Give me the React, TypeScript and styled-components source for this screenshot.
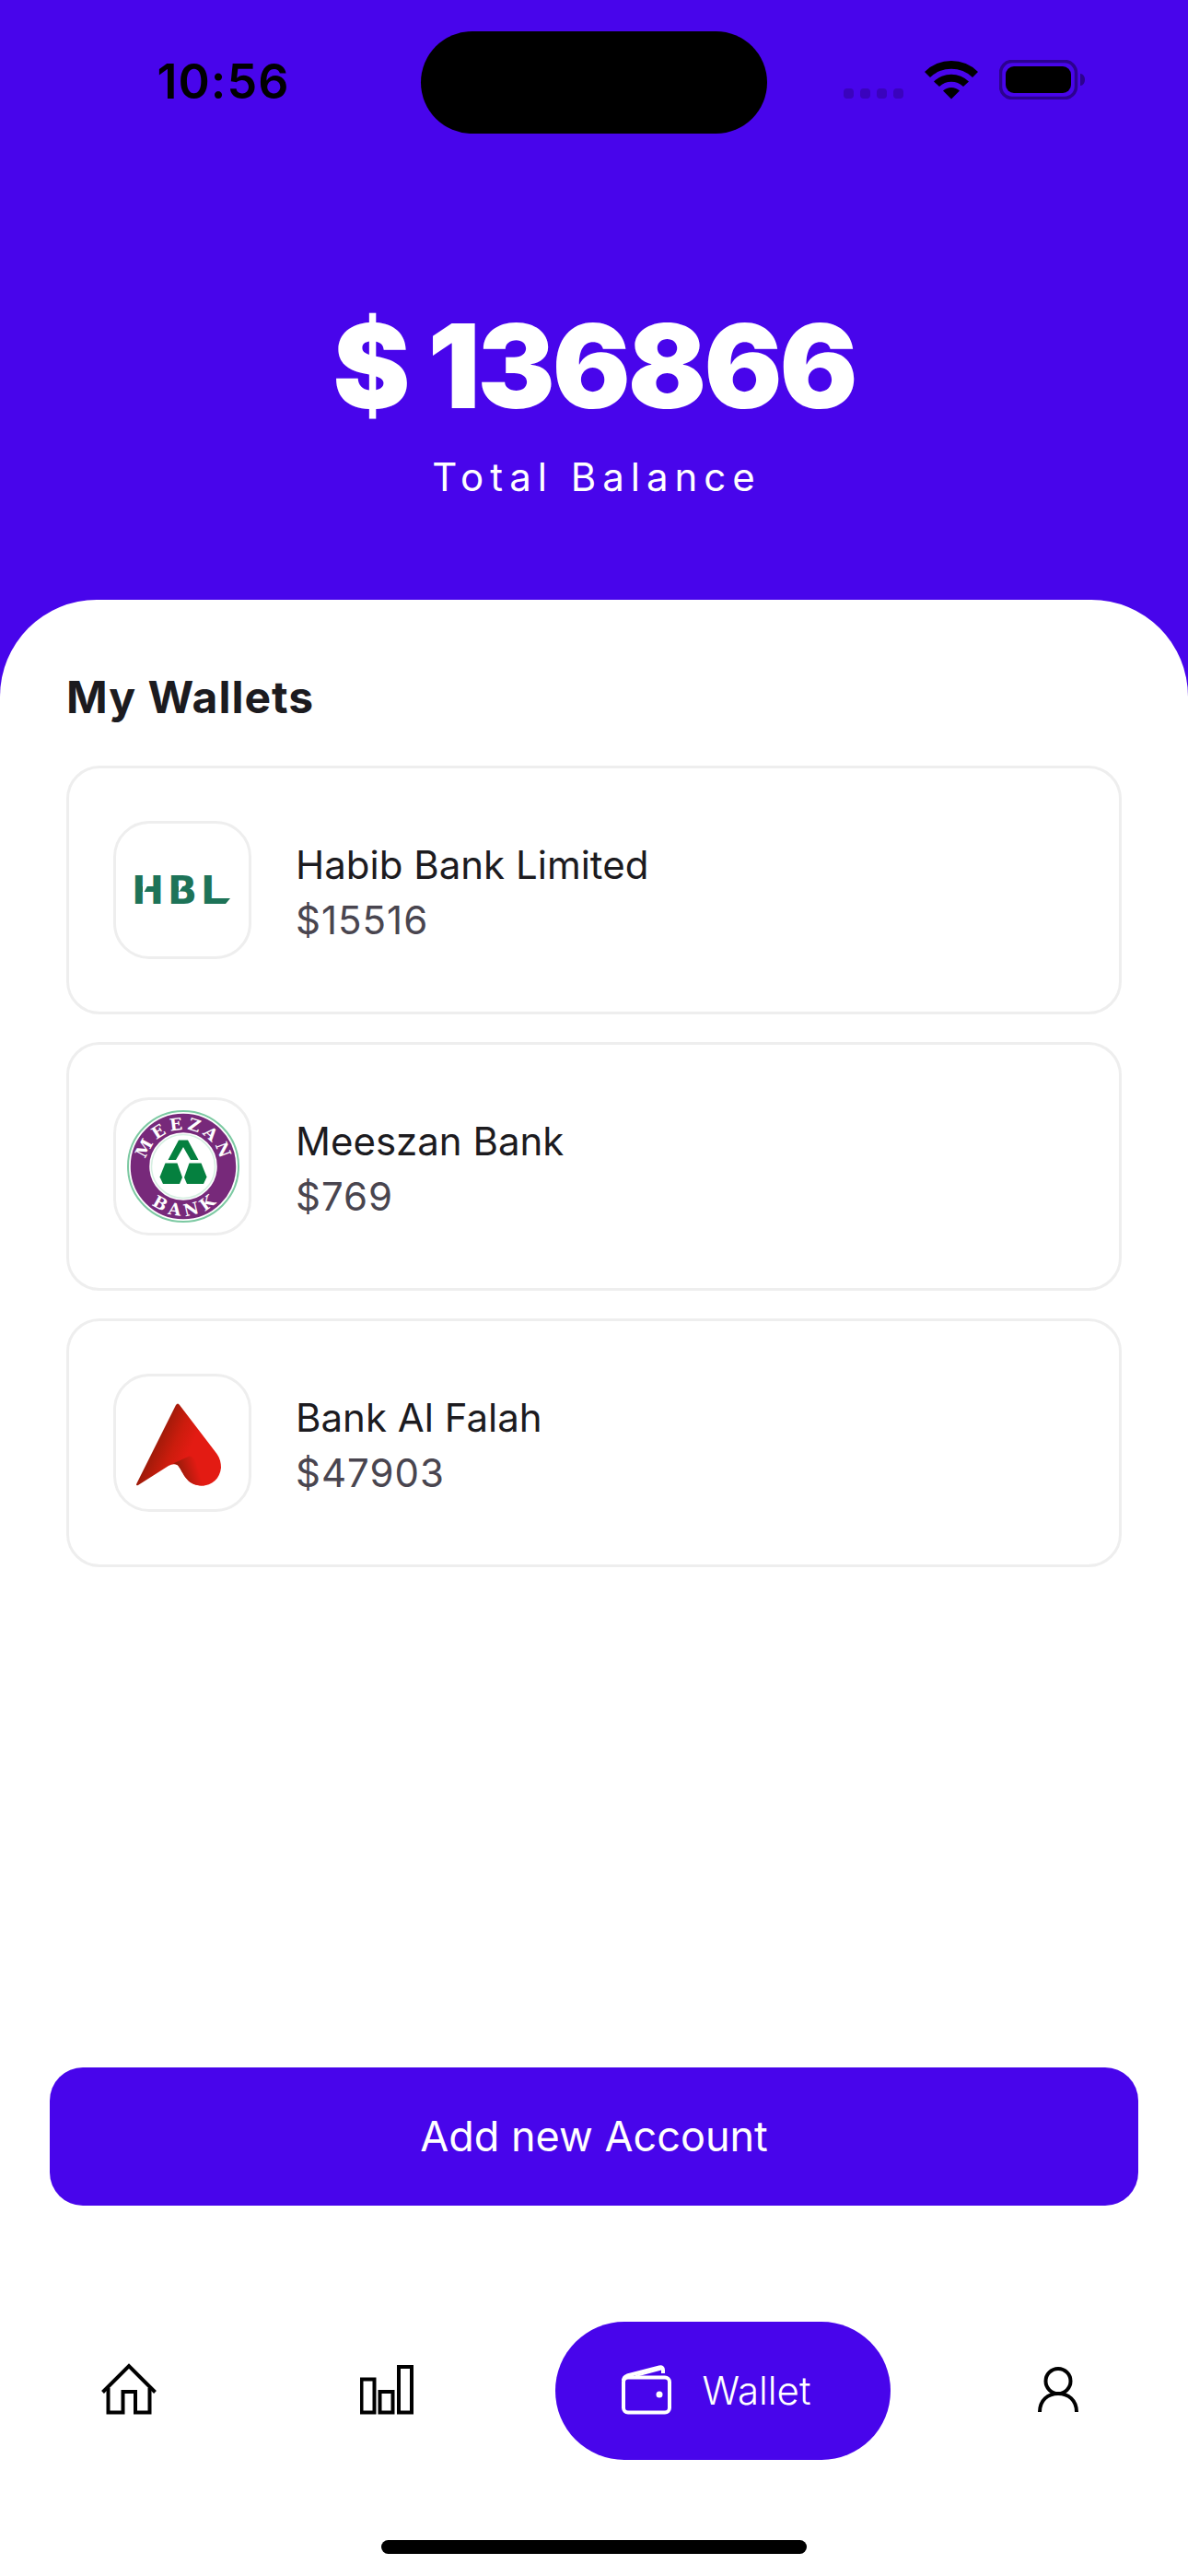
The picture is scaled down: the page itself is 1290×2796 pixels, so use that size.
import React from "react";
import styled, { createGlobalStyle } from "styled-components";

const brand = "#4805eb";
const ink = "#1c1b1f";
const muted = "#49454f";
const line = "#eeeeee";

const GlobalStyle = createGlobalStyle`
  *, *::before, *::after { box-sizing: border-box; }
  body { margin: 0; background: #fff; font-family: Inter, "Liberation Sans", sans-serif; }
  h1, h2, p, ul { margin: 0; padding: 0; }
  button { border: 0; font-family: inherit; cursor: pointer; }
`;

const Screen = styled.div`
  display: flex;
  flex-direction: column;
  min-height: 100vh;
  background: ${brand};
`;

const StatusBar = styled.header`
  display: grid;
  grid-template-columns: 1fr 376px 1fr;
  align-items: center;
  height: 178px;
  color: #000;
`;

const Clock = styled.time`
  justify-self: center;
  padding-left: 28px;
  font-size: 52px;
  line-height: 60px;
  font-weight: 600;
  letter-spacing: 1px;
`;

const Island = styled.div`
  height: 111px;
  border-radius: 56px;
  background: #000;
`;

const StatusIcons = styled.div`
  display: flex;
  align-items: center;
  justify-self: center;
  gap: 23px;
  padding-right: 28px;
  margin-bottom: 6px;
`;

const Balance = styled.section`
  display: flex;
  flex-direction: column;
  align-items: center;
  gap: 15px;
  padding: 143px 72px 103px;
  color: #fff;
`;

const Amount = styled.h1`
  font-size: 126px;
  line-height: 152px;
  font-weight: 900;
  letter-spacing: -3px;
`;

const Caption = styled.p`
  padding-left: 6px;
  font-size: 42px;
  line-height: 60px;
  letter-spacing: 7px;
`;

const Sheet = styled.main`
  display: flex;
  flex: 1;
  flex-direction: column;
  border-radius: 105px 105px 0 0;
  background: #fff;
`;

const Wallets = styled.section`
  flex: 1;
  padding: 72px 72px 0;
`;

const Heading = styled.h2`
  margin-bottom: 40px;
  color: ${ink};
  font-size: 48px;
  line-height: 68px;
  font-weight: 700;
  letter-spacing: 1px;
`;

const WalletList = styled.ul`
  display: flex;
  flex-direction: column;
  gap: 30px;
  list-style: none;
`;

const WalletCard = styled.li`
  display: flex;
  align-items: center;
  gap: 48px;
  padding: 57px 48px;
  border: 3px solid ${line};
  border-radius: 36px;
`;

const LogoTile = styled.div`
  display: grid;
  place-items: center;
  width: 150px;
  height: 150px;
  border: 3px solid ${line};
  border-radius: 39px;
`;

const BankDetails = styled.div`
  padding-top: 6px;
  font-size: 42px;
  line-height: 60px;
`;

const BankName = styled.p`
  color: ${ink};
`;

const BankBalance = styled.p`
  color: ${muted};
  letter-spacing: 1px;
`;

const AddButton = styled.button`
  height: 150px;
  margin: 0 54px 126px;
  border-radius: 36px;
  background: ${brand};
  color: #fff;
  font-size: 45px;
  line-height: 60px;
`;

const TabBar = styled.nav`
  display: flex;
  justify-content: space-around;
  margin-bottom: 87px;
`;

const Tab = styled.button<{ $active?: boolean }>`
  display: flex;
  align-items: center;
  gap: 30px;
  height: 150px;
  padding: 0 69px;
  border-radius: 75px;
  background: ${({ $active }) => ($active ? brand : "transparent")};
  color: ${({ $active }) => ($active ? "#fff" : "#000")};
`;

const TabLabel = styled.span`
  padding-right: 18px;
  font-size: 42px;
  line-height: 60px;
  font-weight: 300;
`;

const HomeIndicator = styled.div`
  align-self: center;
  width: 462px;
  height: 15px;
  margin-bottom: 24px;
  border-radius: 8px;
  background: #000;
`;

const SignalDots = () => (
  <svg width="65" height="43" viewBox="0 0 65 43" fill="#3a03bd" aria-hidden="true">
    {[0, 18, 36, 54].map((x) => (
      <rect key={x} x={x} y="31" width="11" height="11" rx="4" />
    ))}
  </svg>
);

const WifiIcon = () => (
  <svg width="58" height="43" viewBox="0 0 58 43" aria-hidden="true">
    <path d="M0 13 A41 41 0 0 1 58 13 L52 19 A33 33 0 0 0 6 19 Z" />
    <path d="M10 23.500 A27 27 0 0 1 48 23.500 L42 29 A19 19 0 0 0 16 29 Z" />
    <path d="M20 33.500 A13 13 0 0 1 38 33.500 L29 42.500 Z" />
  </svg>
);

const BatteryIcon = () => (
  <svg width="94" height="43" viewBox="0 0 94 43" aria-hidden="true">
    <rect x="1.500" y="1.500" width="82" height="40" rx="12.500" fill="none" stroke="#2c028f" strokeWidth="3.500" />
    <rect x="7" y="7" width="71" height="29" rx="9" />
    <path d="M88 15 C91 15 93 18 93 21.500 S91 28 88 28 Z" fill="#2c028f" />
  </svg>
);

const HblLogo = () => (
  <svg width="144" height="144" viewBox="0 0 144 144" role="img" aria-label="HBL">
    <text x="17 56 92" y="87" fontFamily="DejaVu Sans" fontWeight="700" fontSize="42" fill="#1d7358">
      HBL
    </text>
    <path d="M29 66 H35 L30 75 H29 Z" fill="#fff" />
    <path d="M68 67 H73 L69 73 H68 Z" fill="#fff" />
    <path d="M114 81 H124 L119 87 H114 Z" fill="#1d7358" />
  </svg>
);

const MeezanLogo = () => (
  <svg width="144" height="144" viewBox="0 0 144 144" role="img" aria-label="Meezan Bank">
    <defs>
      <path id="meezan-top" d="M39 96 A41 41 0 1 1 107 96" />
      <path id="meezan-bottom" d="M19.500 72 A53.500 53.500 0 0 0 126.500 72" />
    </defs>
    <circle cx="73" cy="72" r="60" fill="#fff" stroke="#7cc9a2" strokeWidth="2" />
    <circle cx="73" cy="72" r="47" fill="none" stroke="#77297a" strokeWidth="20.500" />
    <circle cx="73" cy="72" r="34.500" fill="#fff" stroke="#d5efe1" strokeWidth="1.500" />
    <g fill="#fff" fontFamily="DejaVu Serif" fontWeight="700" fontSize="18" textAnchor="middle">
      <text letterSpacing="4">
        <textPath href="#meezan-top" startOffset="51%">MEEZAN</textPath>
      </text>
      <text letterSpacing="5">
        <textPath href="#meezan-bottom" startOffset="52%">BANK</textPath>
      </text>
    </g>
    <g fill="#05803f">
      <path d="M68 43.500 H78 L89.500 65 H81 L73 51 L65 65 H56.500 Z" />
      <path d="M53.500 68.500 H66.500 L72 84 L69 91 H51 L47.500 83.500 Z" />
      <path d="M79.500 68.500 H92.500 L98.500 83.500 L95 91 H77 L74 84 Z" />
    </g>
  </svg>
);

const AlfalahLogo = () => (
  <svg width="144" height="144" viewBox="0 0 144 144" role="img" aria-label="Bank Alfalah">
    <defs>
      <linearGradient id="alfalah-body" x1="42" y1="58" x2="82" y2="76" gradientUnits="userSpaceOnUse">
        <stop offset="0" stopColor="#8f1a08" />
        <stop offset="0.600" stopColor="#cb1c0d" />
        <stop offset="1" stopColor="#e31b13" />
      </linearGradient>
      <linearGradient id="alfalah-fold" x1="66" y1="98" x2="87" y2="92" gradientUnits="userSpaceOnUse">
        <stop offset="0" stopColor="#981b0a" />
        <stop offset="1" stopColor="#e31b13" />
      </linearGradient>
    </defs>
    <path d="M65 31 Q67 28 69 31 L109.500 84 C113 89 114 94 114 99 C113 111 104 118.500 93 118.500 C86 118.500 81 116 77.500 112 C72 106 70 99 66.500 96 Q62 94 57 97 L24 118 Q21 119 22.500 116 Z" fill="url(#alfalah-body)" />
    <path d="M62 94.500 L79.500 86.500 Q85 87 88 96 L96 118.500 C86 118.500 81 116 77.500 112 C72 106 70 99 66.500 96 Q64.500 94.500 62 94.500 Z" fill="url(#alfalah-fold)" />
  </svg>
);

const HomeIcon = () => (
  <svg width="60" height="60" viewBox="0 0 60 60" fill="none" stroke="currentColor" strokeWidth="4" aria-hidden="true">
    <path d="M1.500 31.500 L30 3 L58.500 31.500" />
    <path d="M7.500 27 V53.500 H23.500 V31 H37 V53.500 H52.500 V27" />
  </svg>
);

const ChartIcon = () => (
  <svg width="60" height="60" viewBox="0 0 60 60" fill="none" stroke="currentColor" strokeWidth="4" aria-hidden="true">
    <rect x="1.500" y="17.500" width="14" height="36" />
    <rect x="21.500" y="31" width="14" height="22.500" />
    <rect x="42" y="4" width="14" height="49.500" />
  </svg>
);

const WalletIcon = () => (
  <svg width="60" height="60" viewBox="0 0 60 60" fill="none" stroke="currentColor" strokeWidth="4" strokeLinejoin="round" aria-hidden="true">
    <rect x="5" y="15.500" width="50" height="38" rx="5" />
    <path d="M5 19 Q5 15 9 13.500 L44 4.500 Q48 3.500 48 7.500 V11" />
    <path d="M18 14 L46 6.500" strokeWidth="2" />
    <circle cx="44" cy="34" r="3.500" fill="currentColor" stroke="none" />
  </svg>
);

const ProfileIcon = () => (
  <svg width="60" height="60" viewBox="0 0 60 60" fill="none" stroke="currentColor" strokeWidth="4" aria-hidden="true">
    <circle cx="30" cy="19.500" r="13.500" />
    <path d="M10 53 C10 40 19 33 30 33 S50 40 50 53" />
  </svg>
);

const wallets = [
  { name: "Habib Bank Limited", balance: 15516, Logo: HblLogo },
  { name: "Meeszan Bank", balance: 769, Logo: MeezanLogo },
  { name: "Bank Al Falah", balance: 47903, Logo: AlfalahLogo },
];

export default function App() {
  return (
    <>
      <GlobalStyle />
      <Screen>
        <StatusBar>
          <Clock>10:56</Clock>
          <Island />
          <StatusIcons>
            <SignalDots />
            <WifiIcon />
            <BatteryIcon />
          </StatusIcons>
        </StatusBar>
        <Balance>
          <Amount>$ 136866</Amount>
          <Caption>Total Balance</Caption>
        </Balance>
        <Sheet>
          <Wallets>
            <Heading>My Wallets</Heading>
            <WalletList>
              {wallets.map(({ name, balance, Logo }) => (
                <WalletCard key={name}>
                  <LogoTile>
                    <Logo />
                  </LogoTile>
                  <BankDetails>
                    <BankName>{name}</BankName>
                    <BankBalance>${balance}</BankBalance>
                  </BankDetails>
                </WalletCard>
              ))}
            </WalletList>
          </Wallets>
          <AddButton type="button">Add new Account</AddButton>
          <TabBar aria-label="Main">
            <Tab type="button" aria-label="Home">
              <HomeIcon />
            </Tab>
            <Tab type="button" aria-label="Statistics">
              <ChartIcon />
            </Tab>
            <Tab type="button" $active aria-current="page">
              <WalletIcon />
              <TabLabel>Wallet</TabLabel>
            </Tab>
            <Tab type="button" aria-label="Profile">
              <ProfileIcon />
            </Tab>
          </TabBar>
          <HomeIndicator />
        </Sheet>
      </Screen>
    </>
  );
}
